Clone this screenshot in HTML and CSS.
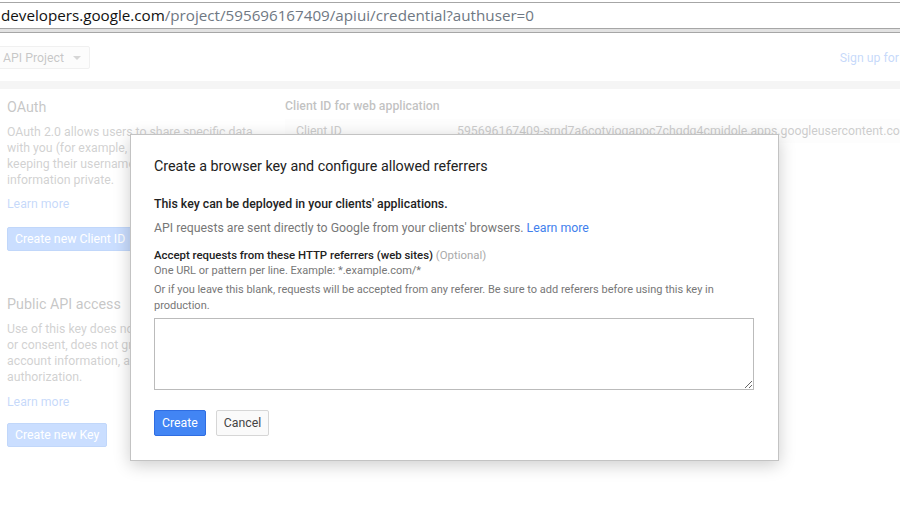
FILE: index.html
```html
<!DOCTYPE html>
<html lang="en">
<head>
<meta charset="utf-8">
<title>Credentials - API Project</title>
<link rel="stylesheet" href="styles.css">
</head>
<body>
<div class="chrome">
  <div class="urlbar"><span class="host">developers.google.com</span><span class="path">/project/595696167409/apiui/credential?authuser=0</span></div>
  <div class="chrome-edge"></div>
</div>
<div class="page">
  <header class="topbar">
    <button class="project-btn">API Project <span class="caret"></span></button>
    <a class="signup">Sign up for a free trial</a>
  </header>
  <div class="band"></div>
  <main class="content">
    <aside class="left-col">
      <section class="block">
        <h2 class="block-title">OAuth</h2>
        <p class="block-text">OAuth 2.0 allows users to share specific data with you (for example, contact lists) while keeping their usernames, passwords, and other information private.</p>
        <a class="link">Learn more</a>
        <button class="btn-action">Create new Client ID</button>
      </section>
      <section class="block block-second">
        <h2 class="block-title">Public API access</h2>
        <p class="block-text">Use of this key does not require any user action or consent, does not grant access to any account information, and is not used for authorization.</p>
        <a class="link link-second">Learn more</a>
        <button class="btn-action btn-second">Create new Key</button>
      </section>
    </aside>
    <div class="right-col">
      <h3 class="table-title">Client ID for web application</h3>
      <div class="kv-row"><span class="kv-key">Client ID</span><span class="kv-val">595696167409-srnd7a6cotvioqapoc7chqdq4cmidole.apps.googleusercontent.com</span></div>
    </div>
  </main>
  <div class="overlay"></div>
  <div class="dialog" role="dialog">
    <div class="dialog-title">Create a browser key and configure allowed referrers</div>
    <div class="dialog-body">
      <p class="d-strong">This key can be deployed in your clients' applications.</p>
      <p class="d-note">API requests are sent directly to Google from your clients' browsers. <a class="d-link">Learn more</a></p>
      <label class="d-label" for="ref">Accept requests from these HTTP referrers (web sites) <span class="d-opt">(Optional)</span></label>
      <p class="d-hint">One URL or pattern per line. Example: *.example.com/*</p>
      <p class="d-hint d-hint2">Or if you leave this blank, requests will be accepted from any referer. Be sure to add referers before using this key in production.</p>
      <textarea id="ref" class="d-textarea"></textarea>
    </div>
    <div class="dialog-buttons">
      <button class="btn-create">Create</button>
      <button class="btn-cancel">Cancel</button>
    </div>
  </div>
</div>
</body>
</html>
```

FILE: styles.css
```css
* { box-sizing: border-box; }
html, body { margin: 0; padding: 0; }
body {
  width: 900px;
  height: 526px;
  overflow: hidden;
  background: #fff;
  font-family: Roboto, "Liberation Sans", Arial, sans-serif;
  color: #444;
}
p { margin: 0; }
h2, h3 { margin: 0; font-weight: normal; }

/* browser chrome */
.chrome { padding-top: 2px; }
.urlbar {
  height: 27px;
  border-top: 1px solid #a6a6a6;
  border-bottom: 1px solid #a6a6a6;
  font-family: "Open Sans", "Noto Sans", sans-serif;
  font-size: 15.2px;
  line-height: 25px;
  white-space: nowrap;
  padding-left: 1px;
}
.host { color: #111; }
.path { color: #6f7883; }
.chrome-edge {
  height: 4px;
  background: #e2e2e2;
  border-bottom: 1px solid #a6a6a6;
}

/* page */
.page {
  position: relative;
  height: 493px;
}
.topbar {
  height: 48px;
  display: flex;
  align-items: flex-start;
  padding-top: 13px;
  white-space: nowrap;
}
.project-btn {
  height: 23px;
  margin-left: -6px;
  padding: 0 8px 0 8px;
  border: 1px solid #ccc;
  border-radius: 2px;
  background: #f5f5f5;
  font-family: inherit;
  font-size: 12.3px;
  color: #444;
  display: flex;
  align-items: center;
  gap: 9px;
}
.caret {
  width: 0; height: 0;
  border-left: 4px solid transparent;
  border-right: 4px solid transparent;
  border-top: 4px solid #777;
}
.signup {
  margin-left: auto;
  margin-right: -57px;
  margin-top: 5px;
  font-size: 12.3px;
  color: #427fed;
}
.band { height: 8px; background: #dedede; }

.content {
  display: flex;
  gap: 13px;
  padding-left: 7px;
}
.left-col { width: 265px; flex: none; }
.block { padding-top: 8px; }
.block-second { padding-top: 43px; }
.block-title {
  font-size: 14.3px;
  line-height: 20px;
  color: #444;
}
.block-text {
  margin-top: 7px;
  font-size: 12.3px;
  line-height: 16px;
  color: #666;
}
.link {
  display: block;
  margin-top: 8px;
  font-size: 12.3px;
  line-height: 16px;
  color: #427fed;
}
.link-second { margin-top: 9px; }
.btn-action {
  display: block;
  margin-top: 15px;
  height: 24px;
  padding: 0 7px;
  border: 1px solid #3079ed;
  border-radius: 2px;
  background: #4d90fe;
  color: #fff;
  font-family: inherit;
  font-size: 12.3px;
  white-space: nowrap;
}
.btn-second { margin-top: 13px; }

.right-col { flex: 1; min-width: 0; padding-top: 9px; white-space: nowrap; }
.table-title {
  font-size: 12.3px;
  line-height: 16px;
  font-weight: 500;
  color: #333;
}
.kv-row {
  display: flex;
  margin-top: 5px;
  height: 24px;
  align-items: center;
  background: #f7f7f7;
  font-size: 12.3px;
  color: #555;
}
.kv-key { width: 172px; flex: none; padding-left: 11px; }
.kv-val { color: #555; }

.overlay {
  position: absolute;
  inset: 0;
  background: rgba(255, 255, 255, 0.7);
}

/* dialog */
.dialog {
  position: absolute;
  left: 130px;
  top: 101px;
  width: 649px;
  padding: 21px 24px 24px 23px;
  background: #fff;
  border: 1px solid #c3c3c3;
  box-shadow: 0 4px 16px rgba(0, 0, 0, 0.2);
  color: #222;
}
.dialog-title {
  font-size: 14.3px;
  line-height: 20px;
  color: #222;
}
.dialog-body { margin-top: 20px; }
.d-strong {
  font-size: 12.3px;
  line-height: 16px;
  font-weight: 500;
  color: #222;
}
.d-note {
  margin-top: 8px;
  font-size: 12.3px;
  line-height: 16px;
  color: #777;
}
.d-link { color: #427fed; }
.d-label {
  display: block;
  margin-top: 11px;
  font-size: 11.4px;
  line-height: 16px;
  font-weight: 500;
  color: #222;
}
.d-opt { font-weight: normal; color: #aaa; }
.d-hint {
  font-size: 11px;
  line-height: 16px;
  color: #777;
}
.d-hint2 { margin-top: 3px; }
.d-textarea {
  display: block;
  margin-top: 4px;
  width: 600px;
  height: 72px;
  border: 1px solid #bbb;
  border-radius: 0;
  resize: both;
  font-family: inherit;
}
.dialog-buttons {
  display: flex;
  gap: 10px;
  margin-top: 20px;
}
.btn-create, .btn-cancel {
  height: 26px;
  padding: 0 7px;
  border-radius: 2px;
  font-family: inherit;
  font-size: 12.3px;
}
.btn-create {
  background: #4285f4;
  border: 1px solid #2f6de1;
  color: #fff;
}
.btn-cancel {
  background: #fafafa;
  border: 1px solid #d6d6d6;
  color: #444;
}
```
